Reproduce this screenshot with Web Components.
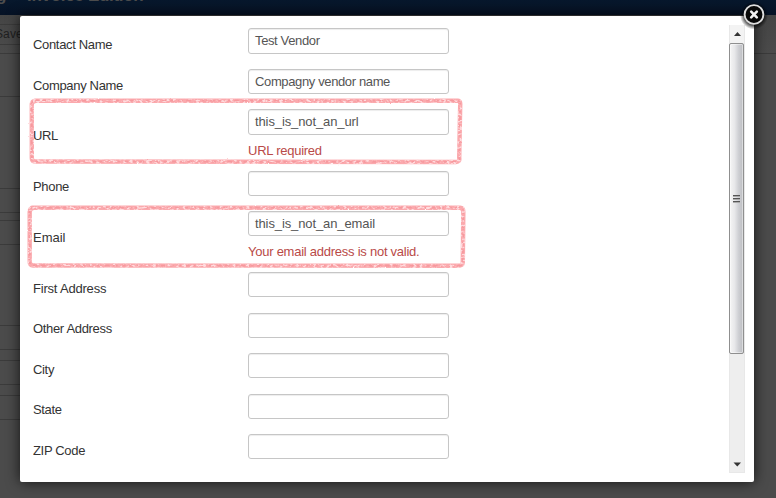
<!DOCTYPE html>
<html lang="en"><head><meta charset="utf-8"><title>Invoice Edition</title>
<style>
html,body{margin:0;height:498px;overflow:hidden;background:#4b4b4b;font:13px/18px "Liberation Sans",Arial,sans-serif;color:#333}
</style></head><body>
<vendor-app></vendor-app>
<script>
const define=(name,html,after)=>customElements.define(name,class extends HTMLElement{
  connectedCallback(){
    if(this.shadowRoot)return;
    this.attachShadow({mode:'open'}).innerHTML=html;
    if(after)after(this,this.shadowRoot);
  }
});

/* Dimmed page behind the dialog */
define('page-backdrop',`<style>
:host{display:block;width:776px;height:498px;background:#4b4b4b;overflow:hidden}
header{height:15px;background:linear-gradient(#07182d,#061225);overflow:hidden;display:flex;color:#4d4d4d;font:bold 17px/20px "Liberation Sans",Arial,sans-serif;white-space:nowrap}
header span{display:block;margin-top:-14px}
.g{width:27px;text-indent:-4px}
.t{letter-spacing:-.3px}
main{position:relative;height:483px;background:linear-gradient(#454545,#4b4b4b 38px)}
.line{position:absolute;left:0;width:20px;height:1px;background:#3b3b3b}
.full{width:776px}
.save{position:absolute;left:-5px;top:10px;color:#202020;font-size:12px;line-height:18px;letter-spacing:.1px}
</style><header><span class="g">g</span><span class="t">Invoice Edition</span></header><main><span class="save">Save</span></main>`,(h,r)=>{
  const m=r.querySelector('main');
  [24,44,53,96,188,212,220,244,325,349,360,384,395,419].forEach(y=>{
    const l=document.createElement('i');l.className='line'+(y===53?' full':'');l.style.top=(y-15)+'px';m.append(l);
  });
});

define('form-row',`<style>
:host{display:flex;align-items:flex-start;box-sizing:border-box}
.label{width:215px;white-space:nowrap;letter-spacing:var(--label-track,-.33px)}
.box{box-sizing:border-box;width:201px;height:26px;border:1px solid #c6c6c6;border-radius:3px;background:#fff;box-shadow:inset 0 1px 1px rgba(0,0,0,.075);padding:3px 6px;color:#555;line-height:18px;white-space:nowrap;letter-spacing:var(--value-track,-.37px)}
.err{color:#b94a48;margin-top:7px;line-height:18px;white-space:nowrap;letter-spacing:-.25px}
</style><div class="label"><slot></slot></div><div><div class="box"></div></div>`,(h,r)=>{
  const b=r.querySelector('.box');
  b.textContent=h.getAttribute('value')||'';
  b.style.height=(h.getAttribute('box')||26)+'px';
  r.querySelector('.label').style.paddingTop=h.getAttribute('drop')+'px';
  h.style.height=h.getAttribute('pitch')+'px';
  if(h.hasAttribute('error')){const e=document.createElement('div');e.className='err';e.textContent=h.getAttribute('error');b.after(e);}
});

define('scroll-bar',`<style>
:host{display:flex;flex-direction:column;box-sizing:border-box;width:16px;height:448px;background:#eee;border:1px solid #e8e8e8;border-width:0 1px 1px}
svg{display:block;flex:none}
.thumb{box-sizing:border-box;height:311px;width:15px;margin-left:-1px;border:1px solid #8f8f8f;border-radius:2px;background:linear-gradient(90deg,#f5f5f5,#e8e8ea 35%,#cfd0d4 65%,#bcbdc1);box-shadow:inset 0 0 0 1px rgba(255,255,255,.45);display:flex;align-items:center;justify-content:center}
.space{flex:1}
</style>
<svg width="14" height="18"><rect width="14" height="18" fill="#f3f3f3"/><path d="M7.5 7L11 11H4z" fill="#333"/></svg>
<div class="thumb"><svg width="7" height="10"><path d="M0 1.5h7M0 4.5h7M0 7.5h7" stroke="#555"/><path d="M0 2.5h7M0 5.5h7M0 8.5h7" stroke="#aaa"/></svg></div>
<div class="space"></div>
<svg width="14" height="18"><path d="M3.5 8.500H11L7.300 12.500z" fill="#333"/></svg>`);

/* Hand-drawn pencil outline laid over a faulty row */
define('crayon-frame',`<style>:host{position:absolute;left:0;top:0;display:block;pointer-events:none}svg{display:block;overflow:visible}</style>
<svg width="450" height="260"><defs><filter id="c" x="-10" y="-10" width="470" height="280" filterUnits="userSpaceOnUse" color-interpolation-filters="sRGB">
<feTurbulence type="fractalNoise" baseFrequency=".3 .45" numOctaves="2" seed="7" result="n"/>
<feDisplacementMap in="SourceGraphic" in2="n" scale="1.6" xChannelSelector="R" yChannelSelector="G" result="d"/>
<feColorMatrix in="n" type="matrix" values="0 0 0 0 1  0 0 0 0 .86  0 0 0 0 .87  5 0 0 0 -2.45" result="w"/>
<feComposite in="w" in2="d" operator="in" result="s"/><feMerge><feMergeNode in="d"/><feMergeNode in="s"/></feMerge></filter></defs>
<g filter="url(#c)" fill="none" stroke-linejoin="round" stroke-linecap="round"><path class="p" stroke="#fba9ad" stroke-width="4.4"/><path class="p" stroke="#f6999e" stroke-width="1.8" stroke-dasharray="3 5"/></g></svg>`,(h,r)=>{
  r.querySelectorAll('.p').forEach(p=>p.setAttribute('d',h.getAttribute('shape')));
});

define('close-button',`<style>:host{display:block;position:absolute}svg{display:block}</style>
<svg width="30" height="30"><defs><radialGradient id="h"><stop offset=".7" stop-color="#000" stop-opacity=".65"/><stop offset="1" stop-color="#000" stop-opacity="0"/></radialGradient></defs>
<circle cx="15" cy="15.5" r="14" fill="url(#h)"/><circle cx="15" cy="14.5" r="9.4" fill="#080808" stroke="#dedede" stroke-width="1.9"/><path d="M12.200 11.700l5.600 5.600M17.800 11.700l-5.600 5.600" stroke="#f4f4f4" stroke-width="2.6" stroke-linecap="round"/></svg>`);

define('modal-dialog',`<style>
:host{position:absolute;left:20px;top:16px;width:734px;height:466px;box-sizing:border-box;background:#fff;border-radius:2px;box-shadow:0 0 14px 0 rgba(0,0,0,.75);display:flex;padding:9px 9px 9px 13px;justify-content:space-between}
.form{display:flex;flex-direction:column;padding-top:3px;height:445px;overflow:hidden}
</style><div class="form"><slot></slot></div><scroll-bar></scroll-bar><slot name="overlay"></slot>`);

define('vendor-app',`<style>:host{display:block;position:relative;width:776px;height:498px;overflow:hidden}
.code{--value-track:-.11px}
.loose{--label-track:-.2px}
.plain{--label-track:0px}
.x{left:719px;top:-16px}
</style><page-backdrop></page-backdrop><modal-dialog>
<form-row pitch="41" drop="8" value="Test Vendor">Contact Name</form-row>
<form-row pitch="40" drop="8" box="25" value="Compagny vendor name">Company Name</form-row>
<form-row class="code" pitch="62" drop="18" value="this_is_not_an_url" error="URL required">URL</form-row>
<form-row pitch="40" drop="7" box="25">Phone</form-row>
<form-row class="code plain" pitch="61" drop="18" box="25" value="this_is_not_an_email" error="Your email address is not valid.">Email</form-row>
<form-row class="loose" pitch="41" drop="8" box="25">First Address</form-row>
<form-row pitch="40" drop="7" box="25">Other Address</form-row>
<form-row pitch="41" drop="8" box="25">City</form-row>
<form-row pitch="40" drop="7" box="25">State</form-row>
<form-row pitch="32" drop="8" box="25">ZIP Code</form-row>
<crayon-frame slot="overlay" shape="M15 84.7H438Q440.500 85 440.200 89L439.200 142Q440 146 436 146L15 145.500Q11.800 145.500 11.800 142V88Q12 85 16 84.700"></crayon-frame>
<crayon-frame slot="overlay" shape="M12 191.700H440Q443.300 192 443.300 196L442.800 246Q443 249.800 438 249.800L13 249.500Q9.700 249.500 9.700 245V196Q9.700 192 14 191.700"></crayon-frame>
<close-button slot="overlay" class="x"></close-button>
</modal-dialog>`);
</script></body></html>
